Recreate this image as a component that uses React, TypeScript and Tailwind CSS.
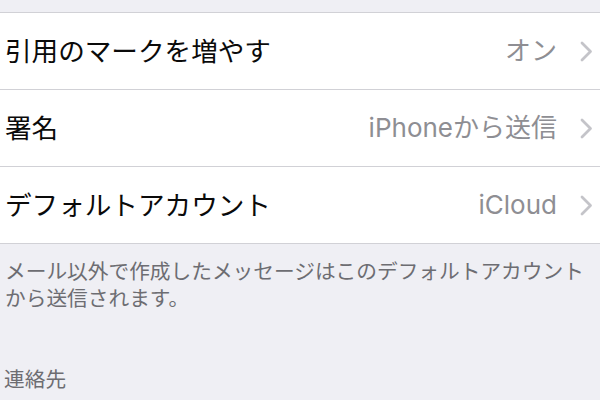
import React from 'react';

interface SettingRow {
  label: string;
  value: string;
}

const rows: SettingRow[] = [
  { label: '引用のマークを増やす', value: 'オン' },
  { label: '署名', value: 'iPhoneから送信' },
  { label: 'デフォルトアカウント', value: 'iCloud' },
];

const fontStack = "font-['Inter','Noto_Sans_CJK_JP',sans-serif]";

const Chevron: React.FC = () => (
  <svg width="13" height="21" viewBox="0 0 13 21" fill="none" className="shrink-0">
    <path d="M2 2 L10.5 10.5 L2 19" stroke="#c4c4c9" strokeWidth="2.8" strokeLinecap="round" strokeLinejoin="round" />
  </svg>
);

const Row: React.FC<{ row: SettingRow; last: boolean }> = ({ row, last }) => (
  <li className={`flex items-center justify-between pl-[5px] pr-[7px] ${last ? 'h-[76px]' : 'h-[77px] border-b border-[#d1d1d6]'}`}>
    <span className="text-[26.6px] text-[#0a0a0a] leading-none">{row.label}</span>
    <div className="flex items-center gap-[23px]">
      <span className="text-[26px] text-[#8e8e93] leading-none">{row.value}</span>
      <Chevron />
    </div>
  </li>
);

export default function App() {
  return (
    <div className={`w-[600px] h-[400px] overflow-hidden bg-[#efeff4] ${fontStack}`}>
      <div className="h-3" />
      <ul className="bg-white border-y border-[#d1d1d6]">
        {rows.map((row, i) => (
          <Row key={row.label} row={row} last={i === rows.length - 1} />
        ))}
      </ul>
      <p className="pl-[5px] pr-2 pt-[14px] text-[20.7px] leading-[27px] text-[#6d6d72]">
        メール以外で作成したメッセージはこのデフォルトアカウントから送信されます。
      </p>
      <h3 className="pl-[4px] mt-[54px] text-[20.7px] leading-[27px] text-[#6d6d72]">連絡先</h3>
    </div>
  );
}
